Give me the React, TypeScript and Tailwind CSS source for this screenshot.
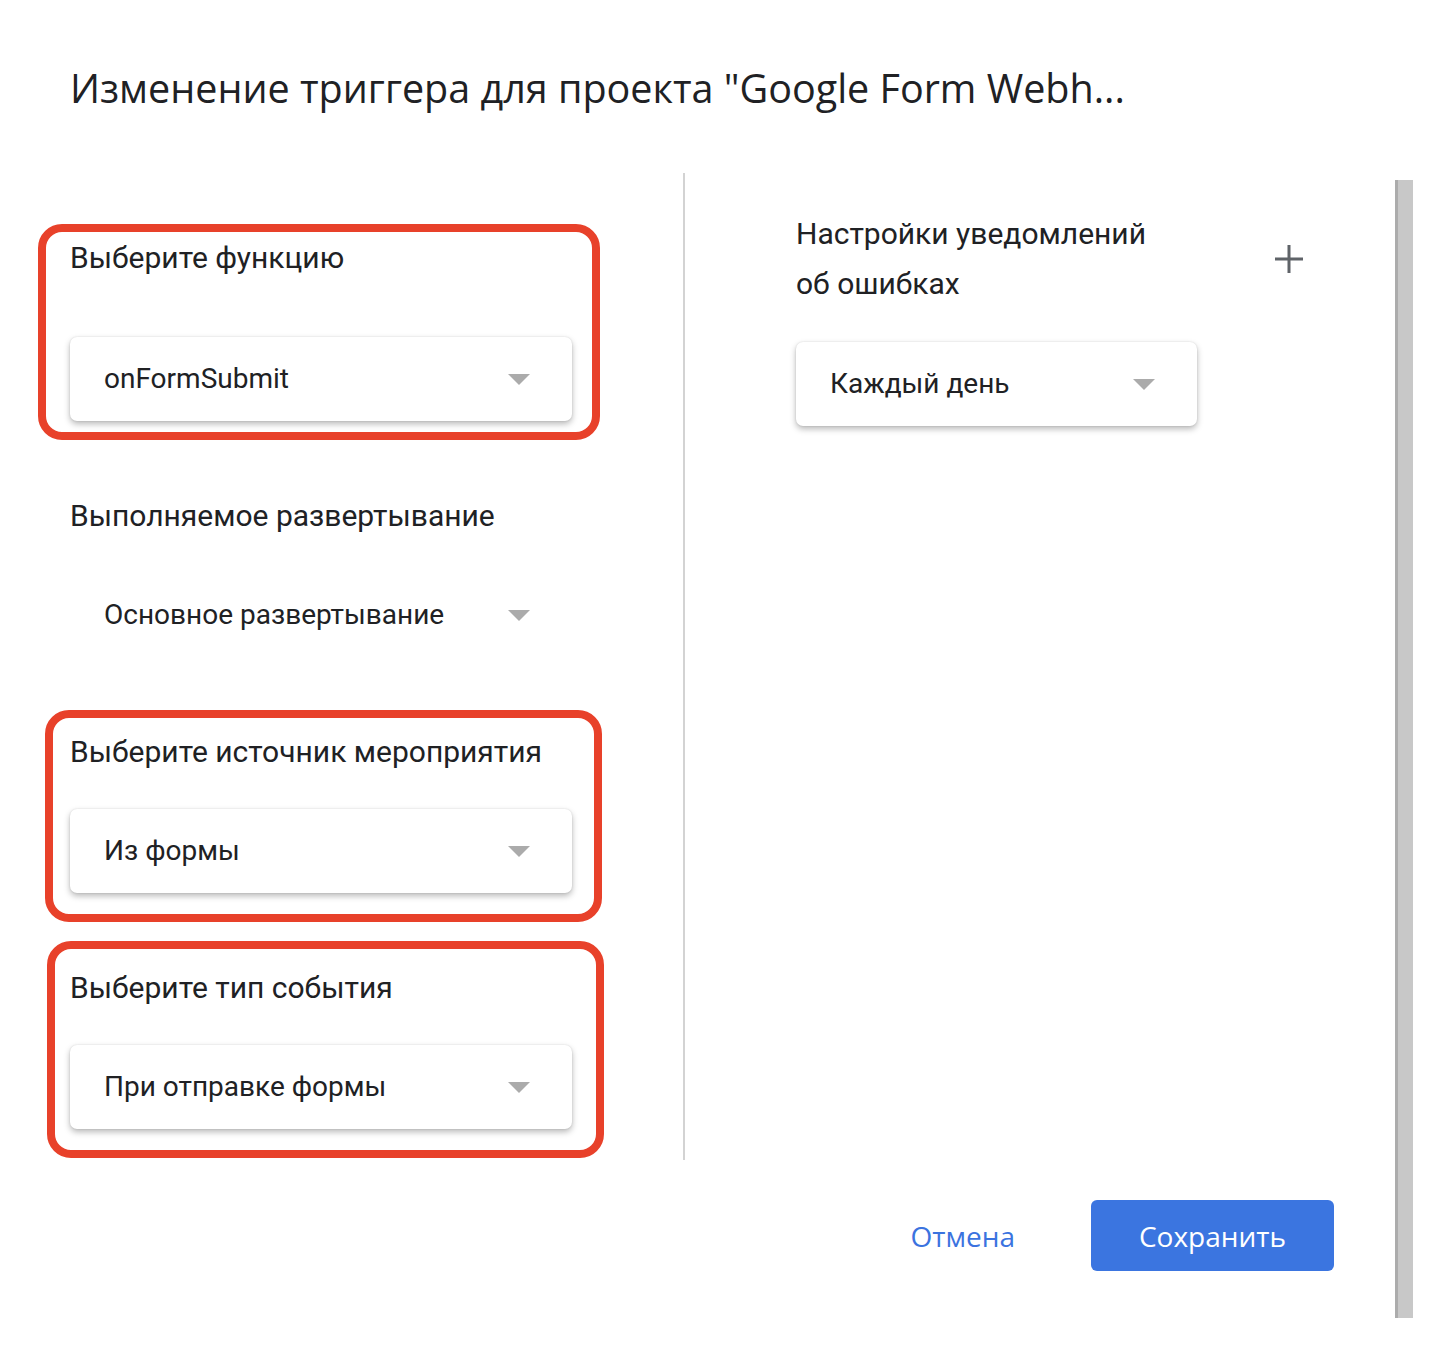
const sans = "font-['Roboto',_'Liberation_Sans',_sans-serif]";
const head = "font-['Open_Sans',_'Liberation_Sans',_sans-serif]";

function Caret() {
  return (
    <svg width="22" height="11" viewBox="0 0 22 11" className="shrink-0">
      <path d="M0 0 L22 0 L11 11 Z" fill="#ababab" />
    </svg>
  );
}

function Select({ value, width, flat }: { value: string; width: string; flat?: boolean }) {
  return (
    <div
      className={`${width} h-[84px] flex items-center justify-between pl-[34px] pr-[42px] rounded-[7px] bg-white ${
        flat ? '' : 'shadow-[0_3px_6px_rgba(0,0,0,0.28),0_0_2px_rgba(0,0,0,0.12)]'
      }`}
    >
      <span className="text-[28px] text-[#202124]">{value}</span>
      <Caret />
    </div>
  );
}

export default function App() {
  return (
    <div className={`w-[1434px] h-[1348px] bg-white flex ${sans}`}>
      <div className="w-[1395px] flex flex-col">
        {/* Title */}
        <h1 className={`pl-[70px] pt-[62px] text-[39.5px] leading-[52px] text-[#202124] ${head}`}>
          Изменение триггера для проекта "Google Form Webh...
        </h1>

        <div className="flex mt-[59px]">
          {/* Left column */}
          <div className="w-[646px] flex flex-col pt-[51px]">
            <div className="ml-[38px] w-[562px] border-[8px] border-[#e8412a] rounded-[24px] pl-[24px] pt-[8px] pb-[11px]">
              <div className="text-[30px] leading-[36px] text-[#202124]">Выберите функцию</div>
              <div className="mt-[61px]">
                <Select value="onFormSubmit" width="w-[502px]" />
              </div>
            </div>

            <div className="pl-[70px] mt-[58px]">
              <div className="text-[30px] leading-[36px] text-[#202124]">Выполняемое развертывание</div>
              <div className="mt-[39px]">
                <Select value="Основное развертывание" width="w-[502px]" flat />
              </div>
            </div>

            <div className="ml-[45px] mt-[53px] w-[557px] border-[8px] border-[#e8412a] rounded-[24px] pl-[17px] pt-[16px] pb-[21px]">
              <div className="text-[30px] leading-[36px] text-[#202124]">Выберите источник мероприятия</div>
              <div className="mt-[39px]">
                <Select value="Из формы" width="w-[502px]" />
              </div>
            </div>

            <div className="ml-[47px] mt-[19px] w-[557px] border-[8px] border-[#e8412a] rounded-[24px] pl-[15px] pt-[21px] pb-[21px]">
              <div className="text-[30px] leading-[36px] text-[#202124]">Выберите тип события</div>
              <div className="mt-[39px]">
                <Select value="При отправке формы" width="w-[502px]" />
              </div>
            </div>
          </div>

          {/* Divider */}
          <div className="w-[2px] h-[987px] bg-[#d3d3d3] ml-[37px]" />

          {/* Right column */}
          <div className="flex-1 pl-[111px] pt-[36px] pr-[92px]">
            <div className="flex items-center justify-between">
              <div className="text-[30px] leading-[50px] text-[#202124]">
                Настройки уведомлений
                <br />
                об ошибках
              </div>
              <svg width="28" height="28" viewBox="0 0 28 28">
                <path d="M14 0 V28 M0 14 H28" stroke="#5f6368" strokeWidth="3" />
              </svg>
            </div>
            <div className="mt-[33px]">
              <Select value="Каждый день" width="w-[401px]" />
            </div>
          </div>
        </div>

        {/* Footer buttons */}
        <div className={`flex items-center justify-end gap-[76px] mt-[40px] pr-[61px] ${head}`}>
          <button className="text-[28px] text-[#3b73df] font-medium">Отмена</button>
          <button className="w-[243px] h-[71px] rounded-[6px] bg-[#3b75e0] text-white text-[28px] font-medium">
            Сохранить
          </button>
        </div>
      </div>

      {/* Scrollbar */}
      <div className="w-[18px] h-[1138px] mt-[180px] bg-[#c8c8c8] border-l-[3px] border-[#acacac]" />
    </div>
  );
}
